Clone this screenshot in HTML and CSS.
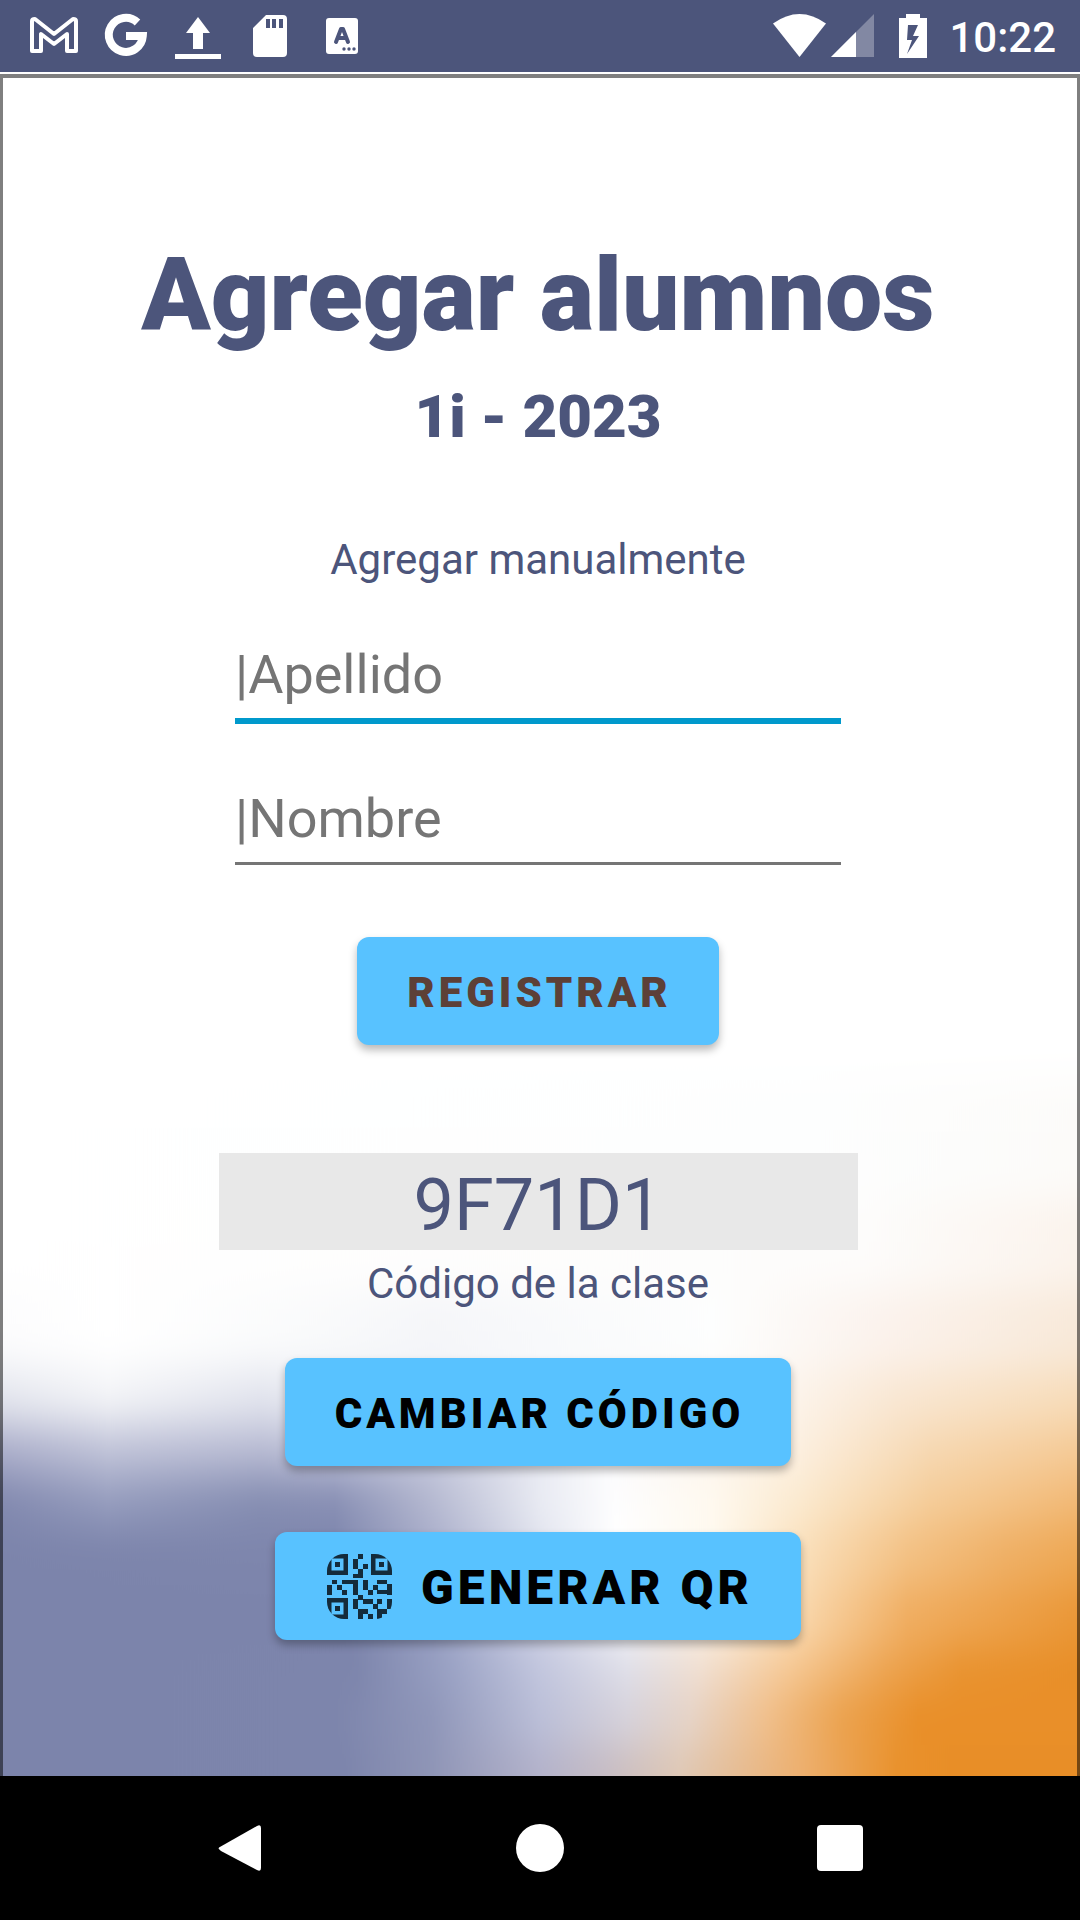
FILE: index.html
```html
<!DOCTYPE html>
<html lang="es">
<head>
<meta charset="utf-8">
<meta name="viewport" content="width=device-width, initial-scale=1">
<title>Agregar alumnos</title>
<link rel="stylesheet" href="styles.css">
</head>
<body>
<header class="status">
  <div class="status-apps">
    <svg class="status-icon" viewBox="0 0 72 72" aria-hidden="true"><path d="M14 51V21q0-2 3-2l19 15 19-15q3 0 3 2v30H49V34L36 44 23 34v17z" fill="none" stroke="#fff" stroke-width="4" stroke-linejoin="round"/></svg>
    <svg class="status-icon" viewBox="0 0 72 72" aria-hidden="true"><path d="M47.500 22.500A17 17 0 1 0 52.800 36H36" fill="none" stroke="#fff" stroke-width="8"/></svg>
    <svg class="status-icon" viewBox="0 0 72 72" aria-hidden="true"><path d="M36 17l12 16h-7v16H31V33h-7zM13 54h46v5H13z" fill="#fff"/></svg>
    <svg class="status-icon" viewBox="0 0 72 72" aria-hidden="true"><path fill-rule="evenodd" d="M32 15h17q4 0 4 4v34q0 4-4 4H23q-4 0-4-4V28zM32 19v9h4v-9zM38 19v9h4v-9zM45 19v9h4v-9z" fill="#fff"/></svg>
    <svg class="status-icon" viewBox="0 0 72 72" aria-hidden="true"><rect x="20" y="18" width="32" height="36" rx="3" fill="#fff"/><path d="M30 42l5-13h2l5 13M32 38h8" fill="none" stroke="#4c557b" stroke-width="4" stroke-linecap="round" stroke-linejoin="round"/><circle cx="38" cy="49" r="1.700" fill="#4c557b"/><circle cx="43" cy="49" r="1.700" fill="#4c557b"/><circle cx="48" cy="49" r="1.700" fill="#4c557b"/></svg>
  </div>
  <div class="status-system">
    <svg class="wifi" viewBox="0 0 53 44" aria-hidden="true"><path d="M0 9.500Q26.500-9.500 53 9.500L26.500 43z" fill="#fff"/></svg>
    <svg class="signal" viewBox="0 0 43 44" aria-hidden="true"><path d="M43 0v43H0z" fill="#fff" opacity=".3"/><path d="M25 18v25H0z" fill="#fff"/></svg>
    <svg class="battery" viewBox="0 0 28 44" aria-hidden="true"><path fill-rule="evenodd" d="M7 0h14v4h7v40H0V4h7zM9 11L8 26h5l-5 14 12-18h-6l5-11z" fill="#fff"/></svg>
    <time class="clock">10:22</time>
  </div>
</header>

<main class="screen">
  <svg class="backdrop" viewBox="0 74 1080 1702" preserveAspectRatio="none" aria-hidden="true">
    <defs>
      <filter id="melt" filterUnits="userSpaceOnUse" x="0" y="900" width="1080" height="1100" color-interpolation-filters="sRGB"><feGaussianBlur stdDeviation="0 20"/></filter>
      <linearGradient id="r0"><stop offset="0" stop-color="#fff"/><stop offset=".75" stop-color="#fdfefe"/><stop offset="1" stop-color="#fcfbf9"/></linearGradient>
      <linearGradient id="r1"><stop offset="0" stop-color="#fff"/><stop offset=".8" stop-color="#fdfcfb"/><stop offset="1" stop-color="#fbf3ec"/></linearGradient>
      <linearGradient id="r2"><stop offset="0" stop-color="#fcfcfd"/><stop offset=".1" stop-color="#fff"/><stop offset=".3" stop-color="#f9fafb"/><stop offset=".4" stop-color="#f5f6f9"/><stop offset=".66" stop-color="#fdfefe"/><stop offset=".82" stop-color="#fbf2ec"/><stop offset="1" stop-color="#f8e9d9"/></linearGradient>
      <linearGradient id="r3"><stop offset="0" stop-color="#e4e6ee"/><stop offset=".1" stop-color="#f3f4f7"/><stop offset=".24" stop-color="#e3e5ee"/><stop offset=".5" stop-color="#f6f7fa"/><stop offset=".7" stop-color="#fdf8f3"/><stop offset=".83" stop-color="#f9e7d3"/><stop offset="1" stop-color="#f7dcb9"/></linearGradient>
      <linearGradient id="r4"><stop offset="0" stop-color="#abaeca"/><stop offset=".1" stop-color="#c0c3d8"/><stop offset=".24" stop-color="#b8bbd3"/><stop offset=".4" stop-color="#c8cbdf"/><stop offset=".56" stop-color="#fbfbfd"/><stop offset=".74" stop-color="#fcefdf"/><stop offset=".86" stop-color="#f6d8b2"/><stop offset="1" stop-color="#f5ca96"/></linearGradient>
      <linearGradient id="r5"><stop offset="0" stop-color="#8289af"/><stop offset=".1" stop-color="#969dbe"/><stop offset=".24" stop-color="#868eb2"/><stop offset=".31" stop-color="#888fb4"/><stop offset=".39" stop-color="#b0b4cd"/><stop offset=".5" stop-color="#e9ebf3"/><stop offset=".57" stop-color="#fdfdfe"/><stop offset=".66" stop-color="#fff9ef"/><stop offset=".74" stop-color="#fbead0"/><stop offset=".86" stop-color="#f5cd9a"/><stop offset="1" stop-color="#f2b976"/></linearGradient>
      <linearGradient id="r6"><stop offset="0" stop-color="#7c84ab"/><stop offset=".31" stop-color="#7e86ad"/><stop offset=".41" stop-color="#adb1cd"/><stop offset=".51" stop-color="#e5e7f0"/><stop offset=".57" stop-color="#fff"/><stop offset=".66" stop-color="#fef9ee"/><stop offset=".74" stop-color="#fae0bc"/><stop offset=".84" stop-color="#f3c184"/><stop offset=".93" stop-color="#efb066"/><stop offset="1" stop-color="#eea854"/></linearGradient>
      <linearGradient id="r7"><stop offset="0" stop-color="#7c84ab"/><stop offset=".32" stop-color="#7c84ab"/><stop offset=".4" stop-color="#969dc0"/><stop offset=".48" stop-color="#c5c9e0"/><stop offset=".58" stop-color="#f2f2f6"/><stop offset=".67" stop-color="#fceedc"/><stop offset=".74" stop-color="#f9d8ae"/><stop offset=".84" stop-color="#f0ae62"/><stop offset="1" stop-color="#ea9737"/></linearGradient>
      <linearGradient id="r8"><stop offset="0" stop-color="#7c84ab"/><stop offset=".33" stop-color="#7d85ac"/><stop offset=".42" stop-color="#9ca4c6"/><stop offset=".5" stop-color="#c2c6de"/><stop offset=".58" stop-color="#dfdfe9"/><stop offset=".65" stop-color="#f1dfd1"/><stop offset=".73" stop-color="#f6c996"/><stop offset=".82" stop-color="#eda553"/><stop offset=".89" stop-color="#e99330"/><stop offset="1" stop-color="#e88e27"/></linearGradient>
      <linearGradient id="r9"><stop offset="0" stop-color="#7c84ab"/><stop offset=".31" stop-color="#7d85ac"/><stop offset=".4" stop-color="#8f96b9"/><stop offset=".5" stop-color="#bbbfd8"/><stop offset=".58" stop-color="#d6d2db"/><stop offset=".64" stop-color="#e6d3c6"/><stop offset=".71" stop-color="#f0bf8b"/><stop offset=".78" stop-color="#ebA24e"/><stop offset=".85" stop-color="#e98f29"/></linearGradient>
      <linearGradient id="r10"><stop offset="0" stop-color="#7c84ab"/><stop offset=".32" stop-color="#7d85ac"/><stop offset=".4" stop-color="#8f95b6"/><stop offset=".5" stop-color="#b3b2ca"/><stop offset=".56" stop-color="#c6bcc4"/><stop offset=".63" stop-color="#dfc8b5"/><stop offset=".74" stop-color="#edb070"/><stop offset=".83" stop-color="#e9922d"/><stop offset=".88" stop-color="#e88e27"/></linearGradient>
    </defs>
    <g filter="url(#melt)">
      <rect y="900" width="1080" height="300" fill="#fff"/>
      <rect y="1080" width="1080" height="120" fill="url(#r0)"/>
      <rect y="1200" width="1080" height="90" fill="url(#r1)"/>
      <rect y="1290" width="1080" height="80" fill="url(#r2)"/>
      <rect y="1370" width="1080" height="55" fill="url(#r3)"/>
      <rect y="1425" width="1080" height="50" fill="url(#r4)"/>
      <rect y="1475" width="1080" height="50" fill="url(#r5)"/>
      <rect y="1525" width="1080" height="60" fill="url(#r6)"/>
      <rect y="1585" width="1080" height="60" fill="url(#r7)"/>
      <rect y="1645" width="1080" height="45" fill="url(#r8)"/>
      <rect y="1690" width="1080" height="55" fill="url(#r9)"/>
      <rect y="1745" width="1080" height="255" fill="url(#r10)"/>
    </g>
  </svg>

  <h1 class="title">Agregar alumnos</h1>
  <p class="course">1i - 2023</p>

  <form class="manual" onsubmit="return false">
    <h2 class="caption">Agregar manualmente</h2>
    <input class="field field-active" type="text" placeholder="|Apellido" aria-label="Apellido">
    <input class="field" type="text" placeholder="|Nombre" aria-label="Nombre">
    <button class="button button-register" type="submit"><span class="button-label">REGISTRAR</span></button>
  </form>

  <section class="class-code">
    <output class="code" id="code">9F71D1</output>
    <label class="caption" for="code">Código de la clase</label>
    <button class="button button-change" type="button"><span class="button-label">CAMBIAR CÓDIGO</span></button>
    <button class="button button-qr" type="button">
      <svg class="qr" viewBox="0 0 65 65" aria-hidden="true">
        <clipPath id="round"><rect width="65" height="65" rx="17"/></clipPath>
        <g clip-path="url(#round)" fill="#142b3b">
          <path fill-rule="evenodd" d="M0 0h21v21H0zM4.500 4.500v12h12v-12zM8 8h5v5H8zM44 0h21v21H44zM48.500 4.500v12h12v-12zM52 8h5v5h-5zM0 44h21v21H0zM4.500 48.500v12h12v-12zM8 52h5v5H8z"/>
          <path d="M31 0h5v5h-5zM26 5h5v10h-5zM36 10h5v5h-5zM31 15h5v9h-5zM26 20h10v4H26zM5 26h5v4H5zM15 26h16v4H15zM26 26h5v15h-5zM36 26h5v10h-5zM50 26h10v4H50zM0 31h5v10H0zM10 31h5v5h-5zM46 31h5v5h-5zM60 30h5v11h-5zM15 36h5v5h-5zM41 36h5v5h-5zM50 36h15v4H50zM31 41h5v5h-5zM26 45h5v10h-5zM36 45h10v5H36zM50 45h5v5h-5zM60 45h5v10h-5zM46 50h5v5h-5zM31 55h5v10h-5zM36 55h5v5h-5zM41 60h5v5h-5zM50 55h10v5H50zM50 60h5v5h-5z"/>
        </g>
      </svg>
      <span class="button-label">GENERAR QR</span>
    </button>
  </section>
</main>

<nav class="navbar" aria-label="Sistema">
  <button class="nav-button" type="button" aria-label="Atrás"><svg viewBox="0 0 50 50" width="50" height="50"><path d="M4 24.500L42 3q4-2 4 2v40q0 4-4 2L6 28q-3-2-2-3.500z" fill="#fff"/></svg></button>
  <button class="nav-button" type="button" aria-label="Inicio"><svg viewBox="0 0 50 50" width="50" height="50"><circle cx="25" cy="25" r="24" fill="#fff"/></svg></button>
  <button class="nav-button" type="button" aria-label="Recientes"><svg viewBox="0 0 50 50" width="50" height="50"><rect x="2" y="2" width="46" height="46" rx="4" fill="#fff"/></svg></button>
</nav>
</body>
</html>
```
FILE: styles.css
```css
* {
  box-sizing: border-box;
}

body {
  display: flex;
  flex-direction: column;
  min-height: 100vh;
  margin: 0;
  background: #fff;
  color: #4c557b;
  font-family: Roboto, sans-serif;
}

button {
  border: 0;
  font-family: inherit;
  cursor: pointer;
}

.status {
  display: flex;
  justify-content: space-between;
  align-items: center;
  height: 72px;
  padding: 0 24px 0 18px;
  background: #4c557b;
  color: #fff;
}

.status-apps,
.status-system {
  display: flex;
  align-items: center;
}

.status-icon {
  width: 72px;
  height: 72px;
}

.wifi {
  width: 53px;
  height: 44px;
}

.signal {
  width: 43px;
  height: 44px;
  margin-left: 5px;
}

.battery {
  width: 28px;
  height: 44px;
  margin: 0 22px 0 25px;
}

.clock {
  padding-top: 4px;
  font-size: 42px;
  font-weight: 500;
  line-height: 48px;
}

.screen {
  position: relative;
  display: flex;
  flex: 1;
  flex-direction: column;
  align-items: center;
  margin-top: 2px;
  padding: 157px 4px 0 0;
  border: solid rgba(0, 0, 0, 0.5);
  border-width: 4px 3px 0;
}

.backdrop {
  position: absolute;
  inset: -4px -3px 0;
  z-index: -1;
  width: calc(100% + 6px);
  height: calc(100% + 4px);
}

.title {
  margin: 0;
  font-size: 102px;
  font-weight: 900;
  line-height: 120px;
}

.course {
  margin: 26px 0 82px;
  font-size: 60px;
  font-weight: 900;
  line-height: 72px;
}

.caption {
  margin: 0;
  font-size: 42px;
  font-weight: 400;
  line-height: 50px;
}

.manual,
.class-code {
  display: flex;
  flex-direction: column;
  align-items: center;
  width: 100%;
}

.field {
  width: 100%;
  max-width: 606px;
  height: 83px;
  margin-top: 58px;
  padding: 0 0 8px;
  border: 0;
  border-bottom: 3px solid #757575;
  border-radius: 0;
  outline: 0;
  background: none;
  color: #4c557b;
  font: 400 54px/72px Roboto, sans-serif;
}

.field-active {
  height: 86px;
  margin-top: 53px;
  border-bottom: 6px solid #0099cc;
}

.field::placeholder {
  color: #757575;
  opacity: 1;
}

.button {
  display: flex;
  align-items: center;
  justify-content: center;
  height: 108px;
  padding: 0 47px 0 50px;
  border-radius: 12px;
  background: #58c2ff;
  box-shadow: 0 5px 8px rgba(0, 0, 0, 0.28);
  color: #000;
  font-size: 42px;
  font-weight: 900;
  letter-spacing: 4px;
}

.button-label {
  padding-top: 2px;
}

.button-register {
  margin-top: 72px;
  color: #5d4037;
}

.class-code {
  padding: 108px 0 136px;
}

.code {
  width: 100%;
  max-width: 639px;
  margin-bottom: 9px;
  padding: 11px 0 2px;
  background: #e8e8e8;
  font-size: 72px;
  line-height: 84px;
  text-align: center;
}

.button-change {
  margin-top: 49px;
}

.button-qr {
  gap: 29px;
  margin-top: 66px;
  padding: 0 48px 0 52px;
  font-size: 48px;
}

.qr {
  width: 65px;
  height: 65px;
}

.navbar {
  display: flex;
  justify-content: center;
  gap: 250px;
  align-items: center;
  height: 144px;
  background: #000;
}

.nav-button {
  display: flex;
  padding: 0;
  background: none;
}
```
